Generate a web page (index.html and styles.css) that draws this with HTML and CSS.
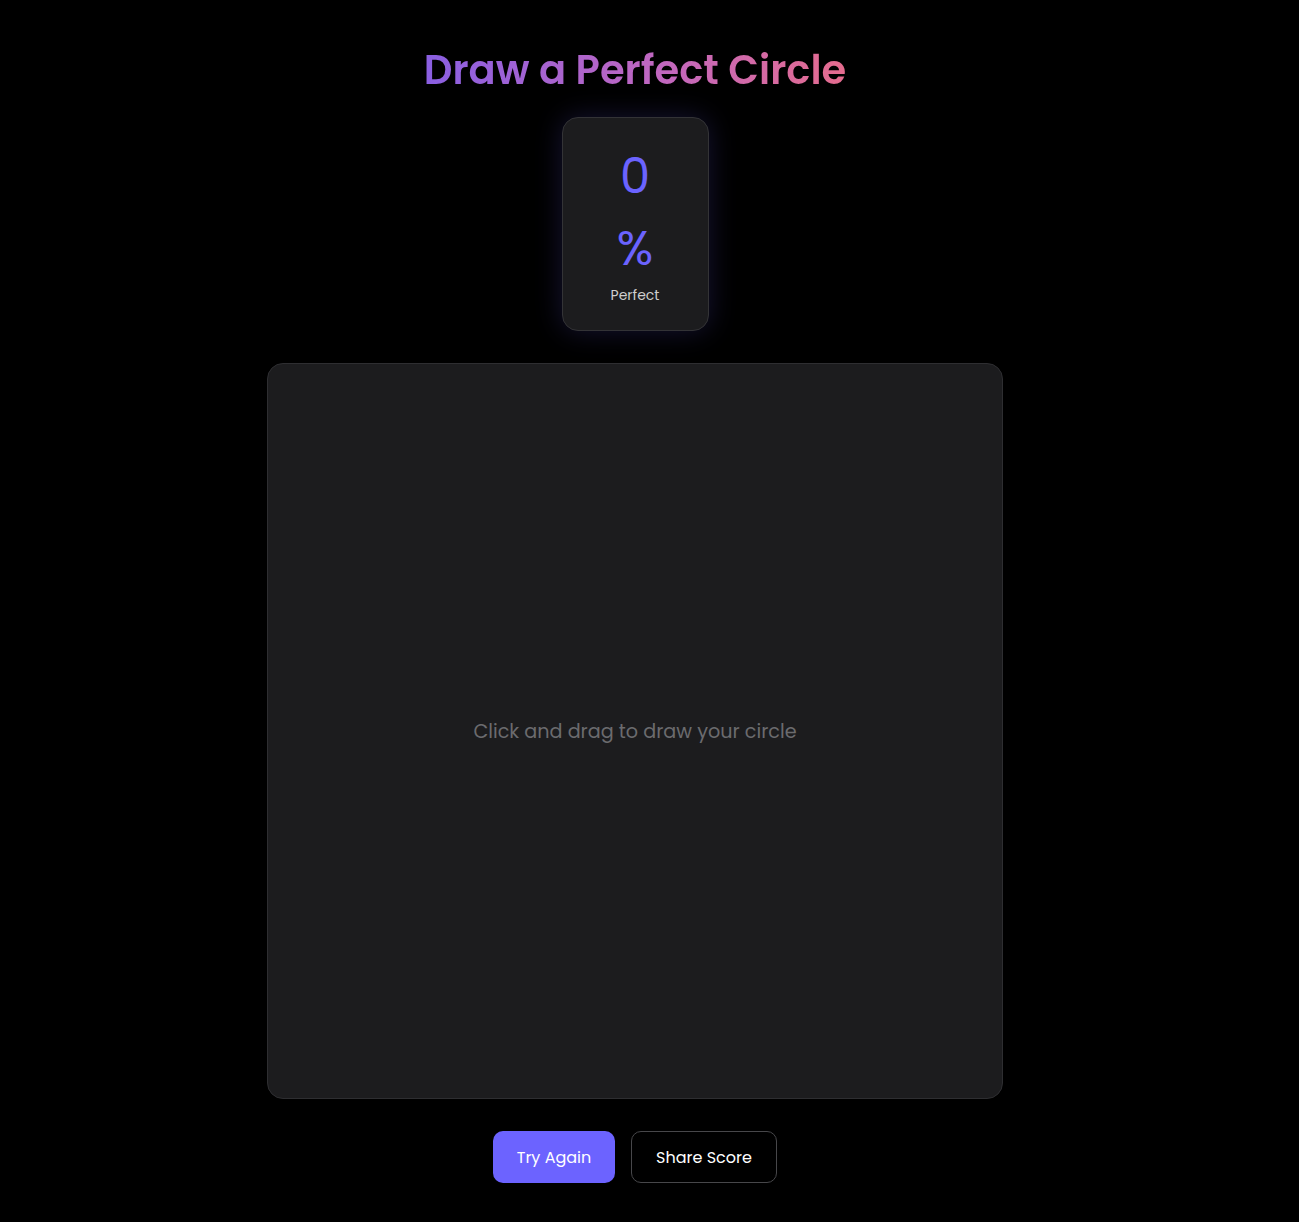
FILE: index.html
```html
<!DOCTYPE html>
<html lang="en">
<head>
<meta charset="utf-8">
<title>Draw a Perfect Circle</title>
<link rel="stylesheet" href="styles.css">
</head>
<body>
<main class="app">
  <h1 class="title">Draw a Perfect Circle</h1>
  <section class="score-card">
    <div class="score-value">0</div>
    <div class="score-value">%</div>
    <div class="score-label">Perfect</div>
  </section>
  <section class="canvas">
    <p class="hint">Click and drag to draw your circle</p>
  </section>
  <div class="actions">
    <button class="btn btn-primary">Try Again</button>
    <button class="btn btn-outline">Share Score</button>
  </div>
</main>
</body>
</html>
```

FILE: styles.css
```css
* { box-sizing: border-box; }
html, body {
  margin: 0;
  background: #000;
}
body {
  font-family: "Poppins", "Inter", "Noto Sans", sans-serif;
  color: #fff;
}
.app {
  display: flex;
  flex-direction: column;
  align-items: center;
  padding: 40px 29px 0 0;
}
.title {
  margin: 0;
  font-size: 40px;
  line-height: 60px;
  font-weight: 600;
  background: linear-gradient(90deg, #8a5fe2 0%, #c067c0 55%, #e56c8e 100%);
  -webkit-background-clip: text;
  background-clip: text;
  color: transparent;
}
.score-card {
  margin-top: 16.5px;
  width: 147px;
  height: 214px;
  padding: 23.5px 24px 0;
  background: #1c1c1e;
  border: 1px solid #333336;
  border-radius: 16px;
  box-shadow: 0 0 28px rgba(108, 99, 255, 0.2);
  display: flex;
  flex-direction: column;
  align-items: center;
}
.score-value {
  font-size: 48px;
  line-height: 72px;
  font-weight: 400;
  color: #6b63ff;
}
.score-label {
  font-size: 14px;
  line-height: 21px;
  color: #cfcfcf;
}
.canvas {
  margin-top: 32.5px;
  width: 736px;
  height: 736px;
  background: #1c1c1e;
  border: 1px solid #2e2e31;
  border-radius: 16px;
  display: flex;
  align-items: center;
  justify-content: center;
}
.hint {
  margin: 0;
  font-size: 19.2px;
  color: #6b6b6e;
}
.actions {
  margin-top: 32px;
  display: flex;
  gap: 16px;
}
.btn {
  height: 52px;
  border-radius: 10px;
  font-family: inherit;
  font-size: 16px;
  color: #fff;
  cursor: pointer;
}
.btn-primary {
  width: 122px;
  background: #6c63ff;
  border: none;
}
.btn-outline {
  width: 146px;
  background: #000;
  border: 1px solid #47474a;
}
```
